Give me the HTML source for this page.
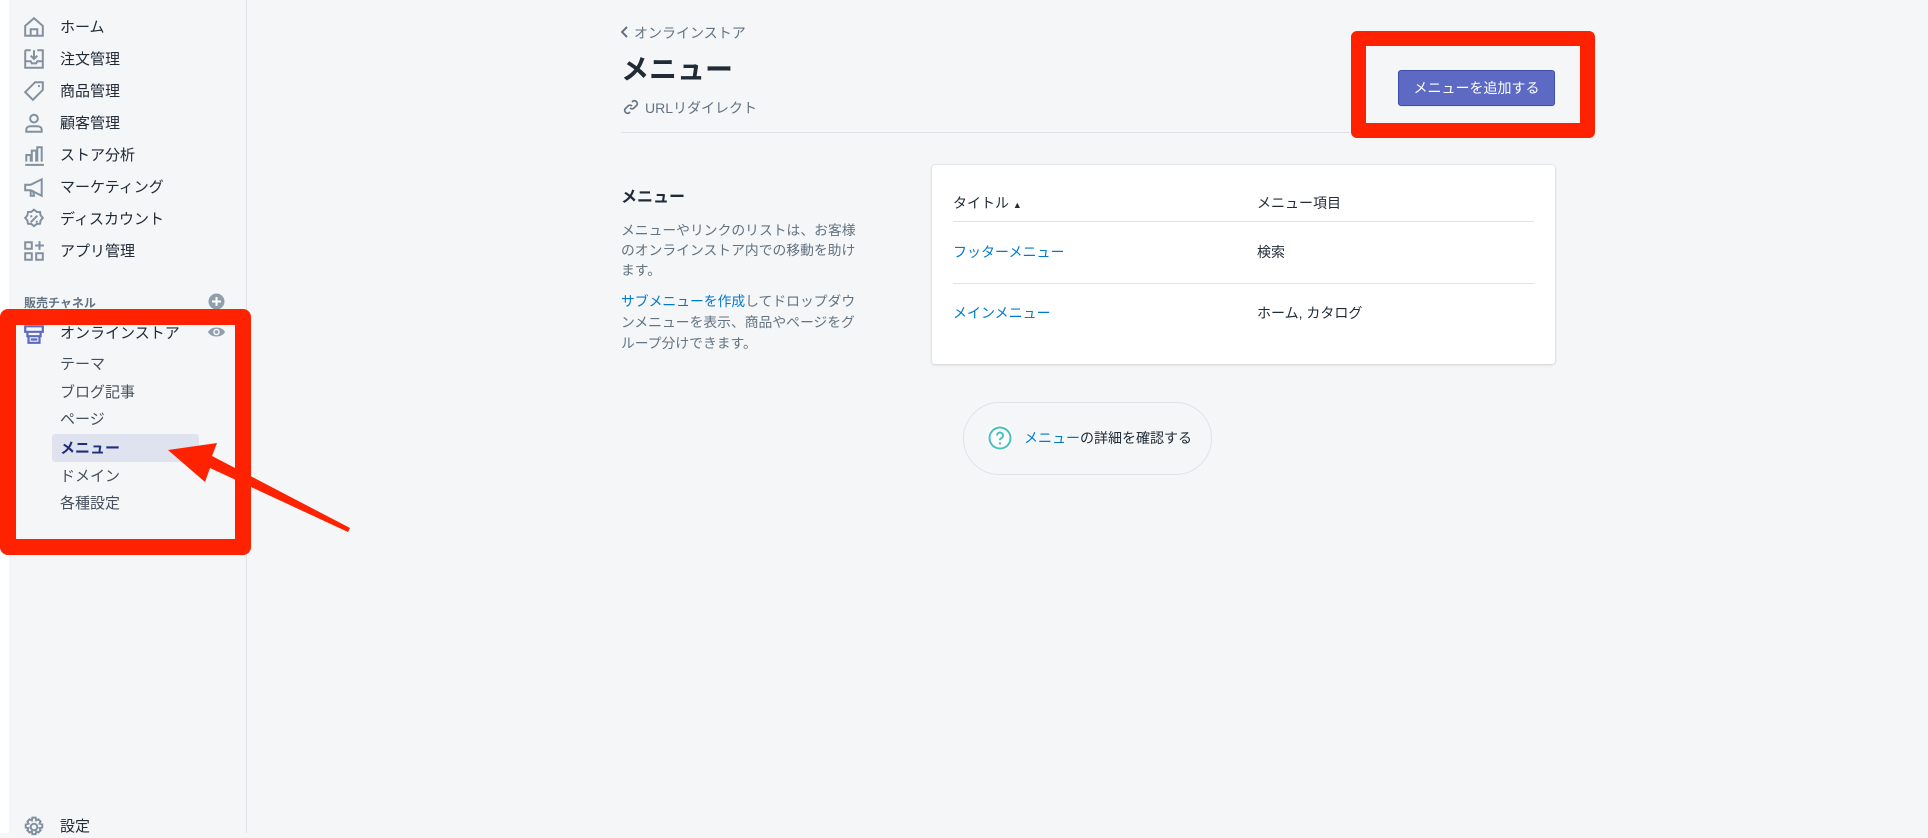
<!DOCTYPE html>
<html><head><meta charset="utf-8"><style>
*{margin:0;padding:0;box-sizing:border-box}
body{width:1928px;height:833px;overflow:hidden;background:#f4f6f8;font-family:"Liberation Sans","Noto Sans CJK JP",sans-serif;color:#212b36;position:relative}
.abs{position:absolute;white-space:nowrap}
#strip{position:absolute;left:0;top:0;width:9px;height:833px;background:#fff}
#side{position:absolute;left:9px;top:0;width:238px;height:833px;background:#f4f6f8;border-right:1px solid #dfe3e8}
.nav{position:absolute;left:60px;font-size:15px;color:#212b36;line-height:20px}
.ic{position:absolute;left:23px;width:22px;height:22px}
.sub{position:absolute;left:60px;font-size:15px;color:#454f5b;line-height:20px}
.g{fill:none;stroke:#8290a0;stroke-width:1.8}
</style></head><body>
<div id="strip"></div>
<div id="side"></div>

<svg class="ic" style="top:16px" viewBox="0 0 20 20"><path class="g" d="M2 9L10 2l8 7v9H2z M7 18v-6h6v6"/></svg>
<div class="nav" style="top:18px">ホーム</div>
<svg class="ic" style="top:48px" viewBox="0 0 20 20"><path class="g" d="M2 2h5M13 2h5v16H2V2M2 12h5l1 2h4l1-2h5M10 2v8M7 7l3 3 3-3"/></svg>
<div class="nav" style="top:50px">注文管理</div>
<svg class="ic" style="top:80px" viewBox="0 0 20 20"><path class="g" d="M11 2h7v7l-9 9-7-7z"/><circle cx="14.5" cy="5.5" r="1" fill="#8290a0"/></svg>
<div class="nav" style="top:82px">商品管理</div>
<svg class="ic" style="top:112px" viewBox="0 0 20 20"><circle class="g" cx="10" cy="6" r="3.5"/><path class="g" d="M3 18v-2c0-2 2-3 4-3h6c2 0 4 1 4 3v2z"/></svg>
<div class="nav" style="top:114px">顧客管理</div>
<svg class="ic" style="top:144px" viewBox="0 0 20 20"><path class="g" d="M2 19h17M3 16V10h4v6M8 16V6h4v10M13 16V3h4v13"/></svg>
<div class="nav" style="top:146px">ストア分析</div>
<svg class="ic" style="top:176px" viewBox="0 0 20 20"><path class="g" d="M2 8h5l10-5v15L7 13H2zM7 13v5h3l-1-5"/></svg>
<div class="nav" style="top:178px">マーケティング</div>
<svg class="ic" style="top:208px" viewBox="0 0 20 20"><path class="g" d="M10 1.5l2.5 2 3 .2.5 3 2 2.3-2 2.3-.5 3-3 .2-2.5 2-2.5-2-3-.2-.5-3-2-2.3 2-2.3.5-3 3-.2zM7 13l6-6"/><circle cx="7.5" cy="7.5" r="1" fill="#8290a0"/><circle cx="12.5" cy="12.5" r="1" fill="#8290a0"/></svg>
<div class="nav" style="top:210px">ディスカウント</div>
<svg class="ic" style="top:240px" viewBox="0 0 20 20"><path class="g" d="M2 2h6v6H2zM2 12h6v6H2zM12 12h6v6h-6zM15 1v8M11 5h8"/></svg>
<div class="nav" style="top:242px">アプリ管理</div>

<div class="abs" style="left:24px;top:294px;font-size:12px;font-weight:bold;color:#637381">販売チャネル</div>
<svg class="abs" style="left:208px;top:293px" width="17" height="17" viewBox="0 0 17 17"><circle cx="8.5" cy="8.5" r="8" fill="#919eab"/><path d="M8.5 4v9M4 8.5h9" stroke="#fff" stroke-width="2"/></svg>

<svg class="ic" style="top:323px" viewBox="0 0 20 20"><path d="M2 3h16v5H2zM4 8v4h12V8M5 12v6h10v-6M7 15h6" fill="none" stroke="#5c6ac4" stroke-width="2"/></svg>
<div class="nav" style="top:324px">オンラインストア</div>
<svg class="abs" style="left:207px;top:325px" width="19" height="14" viewBox="0 0 19 14"><path d="M1 7c3-6 14-6 17 0-3 6-14 6-17 0z" fill="#919eab"/><circle cx="9.5" cy="7" r="3.3" fill="#f4f6f8"/><circle cx="9.5" cy="7" r="1.8" fill="#919eab"/></svg>

<div class="sub" style="top:355px">テーマ</div>
<div class="sub" style="top:383px">ブログ記事</div>
<div class="sub" style="top:410px">ページ</div>
<div class="abs" style="left:52px;top:434px;width:147px;height:28px;background:#dfe3f0;border-radius:3px"></div>
<div class="sub" style="top:439px;font-weight:bold;color:#202e78">メニュー</div>
<div class="sub" style="top:467px">ドメイン</div>
<div class="sub" style="top:494px">各種設定</div>

<svg class="ic" style="top:816px" viewBox="0 0 20 20"><circle class="g" cx="10" cy="10" r="3"/><path class="g" d="M8.5 1.5h3l.5 2.5 2-1 2 2-1 2 2.5.5v3l-2.5.5 1 2-2 2-2-1-.5 2.5h-3l-.5-2.5-2 1-2-2 1-2-2.5-.5v-3l2.5-.5-1-2 2-2 2 1z"/></svg>
<div class="nav" style="top:817px">設定</div>

<div class="abs" style="left:0;top:309px;width:251px;height:246px;border:16px solid #ff2200;border-radius:8px"></div>
<svg class="abs" style="left:0;top:0" width="400" height="600"><path d="M348 532L210 468 205 482 168 450 217 443 212 456 350 528z" fill="#ff2200"/></svg>

<svg class="abs" style="left:621px;top:26px" width="8" height="12" viewBox="0 0 8 12"><path d="M6 1L1 6l5 5" fill="none" stroke="#637381" stroke-width="2"/></svg>
<div class="abs" style="left:634px;top:23px;font-size:14px;color:#637381">オンラインストア</div>
<div class="abs" style="left:621px;top:48px;font-size:28px;font-weight:bold;color:#212b36">メニュー</div>
<svg class="abs" style="left:623px;top:99px" width="16" height="16" viewBox="0 0 16 16"><path d="M7 9a3 3 0 0 0 4 0l3-3a3 3 0 0 0-4-4l-1 1M9 7a3 3 0 0 0-4 0l-3 3a3 3 0 0 0 4 4l1-1" fill="none" stroke="#637381" stroke-width="1.6"/></svg>
<div class="abs" style="left:645px;top:98px;font-size:14px;color:#637381">URLリダイレクト</div>
<div class="abs" style="left:621px;top:132px;width:934px;height:1px;background:#dfe3e8"></div>

<div class="abs" style="left:1398px;top:70px;width:157px;height:36px;background:#5c6ac4;border:1px solid #3f4eae;border-radius:3px;box-shadow:0 1px 0 rgba(22,29,37,.05);color:#fff;font-size:14px;text-align:center;line-height:34px">メニューを追加する</div>
<div class="abs" style="left:1351px;top:31px;width:244px;height:107px;border:15px solid #ff2200;border-radius:6px"></div>

<div class="abs" style="left:621px;top:183px;font-size:16px;font-weight:bold">メニュー</div>
<div class="abs" style="left:621px;top:221px;font-size:13.8px;color:#637381;line-height:20px;white-space:normal;width:240px">メニューやリンクのリストは、お客様のオンラインストア内での移動を助けます。</div>
<div class="abs" style="left:621px;top:291px;font-size:13.8px;color:#637381;line-height:21px;white-space:normal;width:240px"><span style="color:#007ace">サブメニューを作成</span>してドロップダウンメニューを表示、商品やページをグループ分けできます。</div>

<div class="abs" style="left:932px;top:165px;width:623px;height:199px;background:#fff;border-radius:3px;box-shadow:0 0 0 1px rgba(63,63,68,.05),0 1px 3px rgba(63,63,68,.15)"></div>
<div class="abs" style="left:953px;top:193px;font-size:14px">タイトル <span style="font-size:9px">▲</span></div>
<div class="abs" style="left:1257px;top:193px;font-size:14px">メニュー項目</div>
<div class="abs" style="left:953px;top:221px;width:581px;height:1px;background:#dfe3e8"></div>
<div class="abs" style="left:953px;top:242px;font-size:14px;color:#007ace">フッターメニュー</div>
<div class="abs" style="left:1257px;top:242px;font-size:14px">検索</div>
<div class="abs" style="left:953px;top:283px;width:581px;height:1px;background:#dfe3e8"></div>
<div class="abs" style="left:953px;top:303px;font-size:14px;color:#007ace">メインメニュー</div>
<div class="abs" style="left:1257px;top:303px;font-size:14px">ホーム, カタログ</div>

<div class="abs" style="left:963px;top:402px;width:249px;height:73px;border:1px solid #dfe3e8;border-radius:37px"></div>
<svg class="abs" style="left:986px;top:424px" width="28" height="28" viewBox="0 0 28 28"><circle cx="14" cy="14" r="13" fill="#fff"/><circle cx="14" cy="14" r="10.5" fill="none" stroke="#47c1bf" stroke-width="2"/><path d="M11 11.5a3 3 0 1 1 4 2.8c-.8.4-1 .9-1 1.8" fill="none" stroke="#47c1bf" stroke-width="2"/><circle cx="14" cy="19.5" r="1.2" fill="#47c1bf"/></svg>
<div class="abs" style="left:1024px;top:428px;font-size:14px;color:#212b36"><span style="color:#007ace">メニュー</span>の詳細を確認する</div>
</body></html>
